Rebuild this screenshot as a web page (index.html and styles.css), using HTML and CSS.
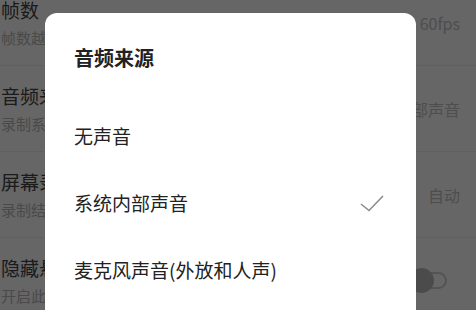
FILE: index.html
```html
<!DOCTYPE html>
<html lang="zh-CN">
<head>
  <meta charset="UTF-8" />
  <meta name="viewport" content="width=device-width, initial-scale=1.0"/>
  <title>音频来源</title>
  <link rel="stylesheet" href="styles.css">
</head>
<body>
  <!-- 设置列表（对话框后面） -->
  <ul class="settings">
    <li class="row">
      <div class="row-text">
        <p class="row-title">帧数</p>
        <p class="row-sub">帧数越高画面越流畅</p>
      </div>
      <span class="row-value">60fps</span>
    </li>
    <li class="row">
      <div class="row-text">
        <p class="row-title">音频来源</p>
        <p class="row-sub">录制系统声音或麦克风</p>
      </div>
      <span class="row-value">系统内部声音</span>
    </li>
    <li class="row">
      <div class="row-text">
        <p class="row-title">屏幕录制方向</p>
        <p class="row-sub">录制结果的画面方向</p>
      </div>
      <span class="row-value">自动</span>
    </li>
    <li class="row">
      <div class="row-text">
        <p class="row-title">隐藏悬浮窗</p>
        <p class="row-sub">开启此选项后录制时隐藏</p>
      </div>
      <span class="switch"><span class="switch-thumb"></span></span>
    </li>
  </ul>

  <div class="overlay"></div>

  <!-- 选择对话框 -->
  <div class="dialog">
    <h2 class="dialog-title">音频来源</h2>
    <ul class="options">
      <li class="option">无声音</li>
      <li class="option selected">
        系统内部声音
        <svg class="check" width="24" height="18" viewBox="0 0 24 18">
          <polyline points="1,10 9,16.5 23,2" fill="none" stroke="#8c8c8c" stroke-width="1.6"/>
        </svg>
      </li>
      <li class="option">麦克风声音(外放和人声)</li>
    </ul>
  </div>
</body>
</html>
```

FILE: styles.css
```css
/* ================================
   Geral
   ================================ */
* {
  margin: 0;
  padding: 0;
  box-sizing: border-box;
}
body {
  width: 476px;
  height: 310px;
  overflow: hidden;
  background-color: #fff;
  font-family: "Noto Sans CJK SC", "Noto Sans", sans-serif;
}

/* ================================
   Lista de configurações
   ================================ */
.settings {
  list-style: none;
  margin-top: -20px;
}
.row {
  display: flex;
  align-items: center;
  height: 86px;
  padding: 0 16px 0 1px;
  border-bottom: 1px solid #f0f0f0;
}
.row-text {
  flex: 1;
  min-width: 0;
  white-space: nowrap;
  overflow: hidden;
  padding-top: 1px;
}
.row-title {
  font-size: 19px;
  line-height: 24px;
  color: #444;
}
.row-sub {
  font-size: 15px;
  line-height: 20px;
  margin-top: 6px;
  color: #b8b8b8;
}
.row-value {
  font-size: 16px;
  color: #c2c2c2;
  white-space: nowrap;
}

/* interruptor desligado */
.switch {
  position: relative;
  width: 36px;
  height: 17px;
  margin-right: 13px;
  border: 2px solid #d2d2d2;
  border-radius: 9px;
}
.switch-thumb {
  position: absolute;
  left: -4px;
  top: -6px;
  width: 25px;
  height: 25px;
  border-radius: 50%;
  background-color: #bcbcbc;
}

/* ================================
   Fundo escuro + diálogo
   ================================ */
.overlay {
  position: fixed;
  inset: 0;
  background-color: rgba(0, 0, 0, 0.6);
}
.dialog {
  position: fixed;
  left: 45px;
  top: 13px;
  width: 371px;
  bottom: -30px;
  background-color: #fff;
  border-radius: 12px;
  padding: 31px 0 0 29px;
}
.dialog-title {
  font-size: 20px;
  line-height: 28px;
  font-weight: bold;
  color: #222;
  margin-bottom: 30px;
}
.options {
  list-style: none;
}
.option {
  display: flex;
  align-items: center;
  justify-content: space-between;
  height: 67px;
  padding-right: 32px;
  font-size: 19px;
  color: #222;
  white-space: nowrap;
}
.check {
  display: block;
}
```
